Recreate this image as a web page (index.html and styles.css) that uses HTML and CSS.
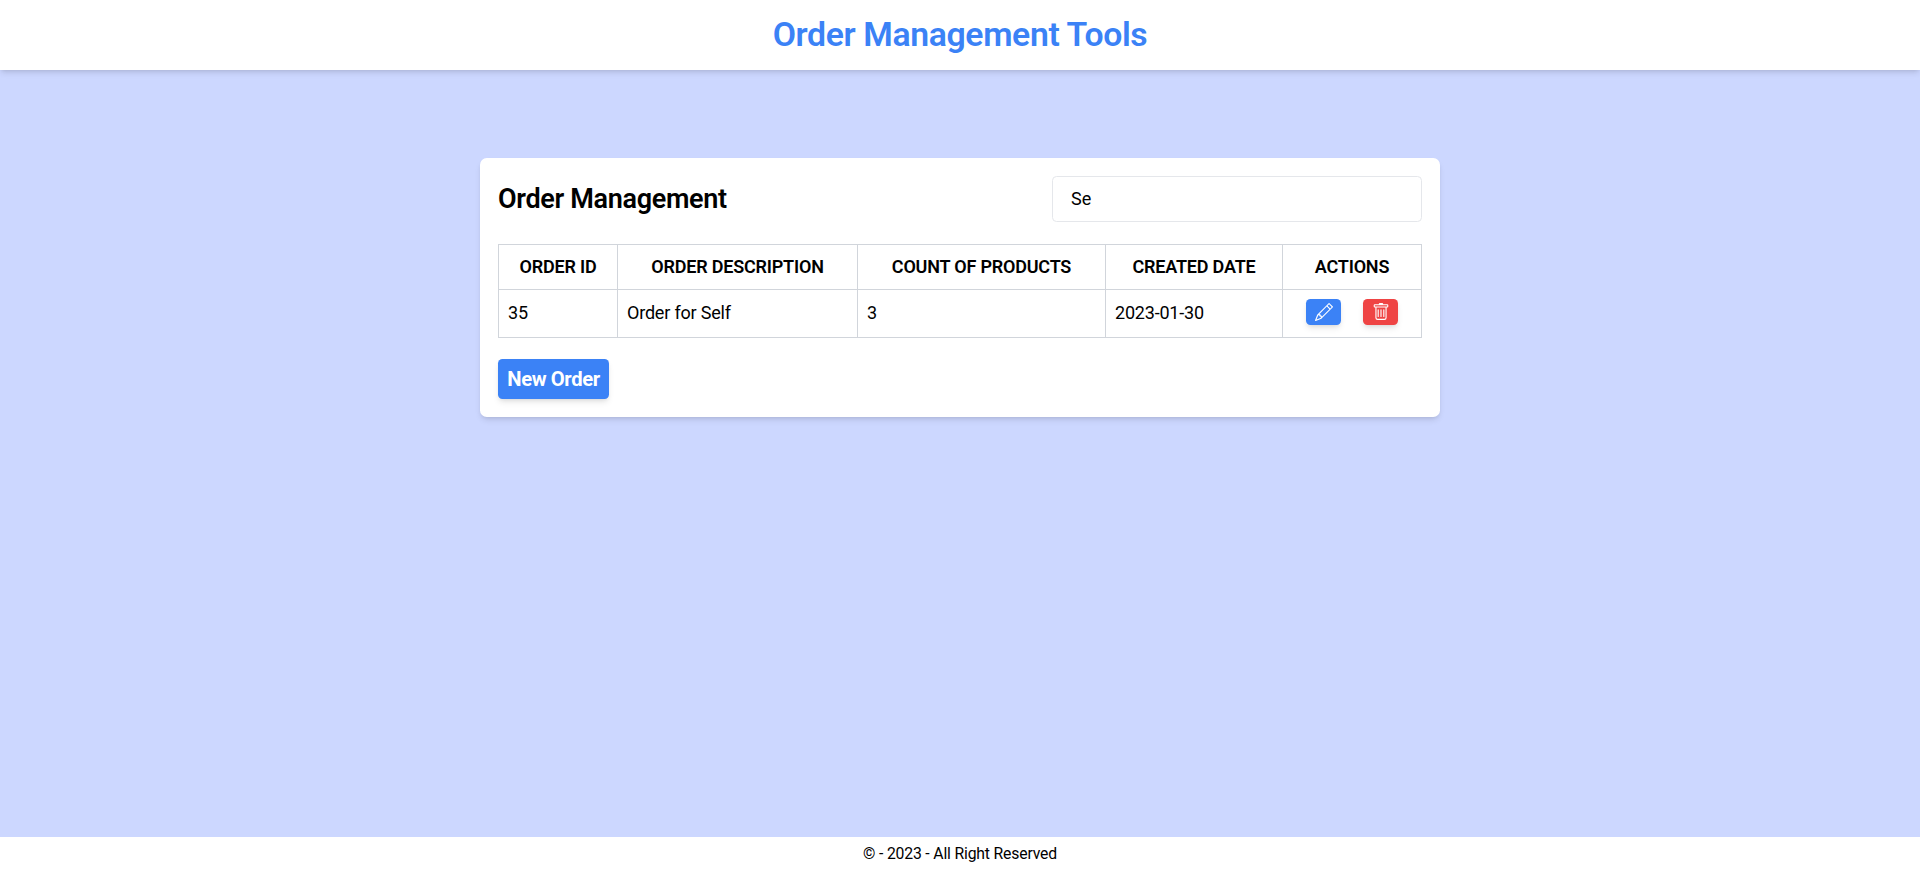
FILE: index.html
```html
<!DOCTYPE html>
<html lang="en">
<head>
<meta charset="utf-8">
<title>Order Management Tools</title>
<link rel="stylesheet" href="styles.css">
</head>
<body>
<header class="site-header"><h1 class="site-title">Order Management Tools</h1></header>
<main class="content">
  <section class="card">
    <div class="card-head">
      <h2 class="card-title">Order Management</h2>
      <input class="search" type="text" value="Se" aria-label="Search">
    </div>
    <table class="orders">
      <colgroup><col class="c-id"><col class="c-desc"><col class="c-count"><col class="c-date"><col class="c-act"></colgroup>
      <thead><tr><th>ORDER ID</th><th>ORDER DESCRIPTION</th><th>COUNT OF PRODUCTS</th><th>CREATED DATE</th><th>ACTIONS</th></tr></thead>
      <tbody><tr>
        <td>35</td><td>Order for Self</td><td>3</td><td>2023-01-30</td>
        <td class="action-cell"><div class="actions">
          <button class="icon-btn edit" aria-label="Edit"><svg class="icon" viewBox="0 0 16 16"><path d="M12.146.146a.5.5 0 0 1 .708 0l3 3a.5.5 0 0 1 0 .708l-10 10a.5.5 0 0 1-.168.11l-5 2a.5.5 0 0 1-.65-.65l2-5a.5.5 0 0 1 .11-.168l10-10zM11.207 2.5 13.5 4.793 14.793 3.5 12.5 1.207 11.207 2.5zm1.586 3L10.5 3.207 4 9.707V10h.5a.5.5 0 0 1 .5.5v.5h.5a.5.5 0 0 1 .5.5v.5h.293l6.5-6.5zm-9.761 5.175-.106.106-1.528 3.821 3.821-1.528.106-.106A.5.5 0 0 1 5 12.5V12h-.5a.5.5 0 0 1-.5-.5V11h-.5a.5.5 0 0 1-.468-.325z"/></svg></button>
          <button class="icon-btn delete" aria-label="Delete"><svg class="icon" viewBox="0 0 16 16"><path d="M5.5 5.5A.5.5 0 0 1 6 6v6a.5.5 0 0 1-1 0V6a.5.5 0 0 1 .5-.5zm2.5 0a.5.5 0 0 1 .5.5v6a.5.5 0 0 1-1 0V6a.5.5 0 0 1 .5-.5zm3 .5a.5.5 0 0 0-1 0v6a.5.5 0 0 0 1 0V6z"/><path fill-rule="evenodd" d="M14.500 3a1 1 0 0 1-1 1H13v9a2 2 0 0 1-2 2H5a2 2 0 0 1-2-2V4h-.5a1 1 0 0 1-1-1V2a1 1 0 0 1 1-1H6a1 1 0 0 1 1-1h2a1 1 0 0 1 1 1h3.500a1 1 0 0 1 1 1v1zM4.118 4 4 4.059V13a1 1 0 0 0 1 1h6a1 1 0 0 0 1-1V4.059L11.882 4H4.118zM2.500 3V2h11v1h-11z"/></svg></button>
        </div></td>
      </tr></tbody>
    </table>
    <button class="new-order">New Order</button>
  </section>
</main>
<footer class="site-footer">© - 2023 - All Right Reserved</footer>
</body>
</html>
```
FILE: styles.css
```css
* { box-sizing: border-box; margin: 0; }
html { font-size: 18px; }
body { min-height: 100vh; display: flex; flex-direction: column; background: #ccd7ff; color: #000; font-family: Roboto, sans-serif; line-height: 1.5; }
.site-header { height: 70px; display: flex; align-items: center; justify-content: center; background: #fff; box-shadow: 0 4px 6px -1px rgba(0,0,0,.1), 0 2px 4px -2px rgba(0,0,0,.1); }
.site-title { font-size: 33.75px; line-height: 40px; font-weight: 600; letter-spacing: -.36px; color: #3b82f6; }
.content { flex: 1; padding-top: 88px; }
.card { width: 960px; height: 259px; margin: 0 auto; padding: 18px; background: #fff; border-radius: 6.75px; box-shadow: 0 4px 6px -1px rgba(0,0,0,.1), 0 2px 4px -2px rgba(0,0,0,.1); }
.card-head { display: flex; justify-content: space-between; align-items: center; height: 46px; margin-bottom: 22px; }
.card-title { padding-bottom: 1px; font-size: 27px; line-height: 36px; font-weight: 600; letter-spacing: -.33px; }
.search { width: 370px; height: 46px; padding: 0 18px 2px; border: 1px solid #e5e7eb; border-radius: 4.5px; font: 400 18px/27px Roboto, sans-serif; outline: 0; }
.orders { width: 924px; border-collapse: collapse; table-layout: fixed; }
.c-id { width: 119px; }
.c-desc { width: 240px; }
.c-count { width: 248px; }
.c-date { width: 177px; }
.c-act { width: 139px; }
th, td { border: 1px solid #d1d5db; padding: 0 9px 2px; letter-spacing: -.2px; }
th { height: 45px; font-weight: 600; text-align: center; }
td { height: 48px; }
.action-cell { padding-bottom: 4px; }
.actions { display: flex; justify-content: center; gap: 22px; }
button { border: 0; color: #fff; font-family: inherit; box-shadow: 0 4px 6px -1px rgba(0,0,0,.1), 0 2px 4px -2px rgba(0,0,0,.1); }
.icon-btn { display: flex; align-items: center; justify-content: center; width: 35px; height: 26px; padding: 0; border-radius: 4.5px; }
.icon { width: 18px; height: 18px; fill: currentColor; }
.edit, .new-order { background: #3b82f6; }
.delete { background: #ef4444; }
.new-order { display: block; width: 111px; height: 40px; margin-top: 21px; padding: 0; border-radius: 4.5px; font-size: 20.25px; font-weight: 700; letter-spacing: -.4px; line-height: 30px; }
.site-footer { height: 35px; background: #fff; text-align: center; font-size: 15.75px; letter-spacing: -.17px; line-height: 34px; }
```
